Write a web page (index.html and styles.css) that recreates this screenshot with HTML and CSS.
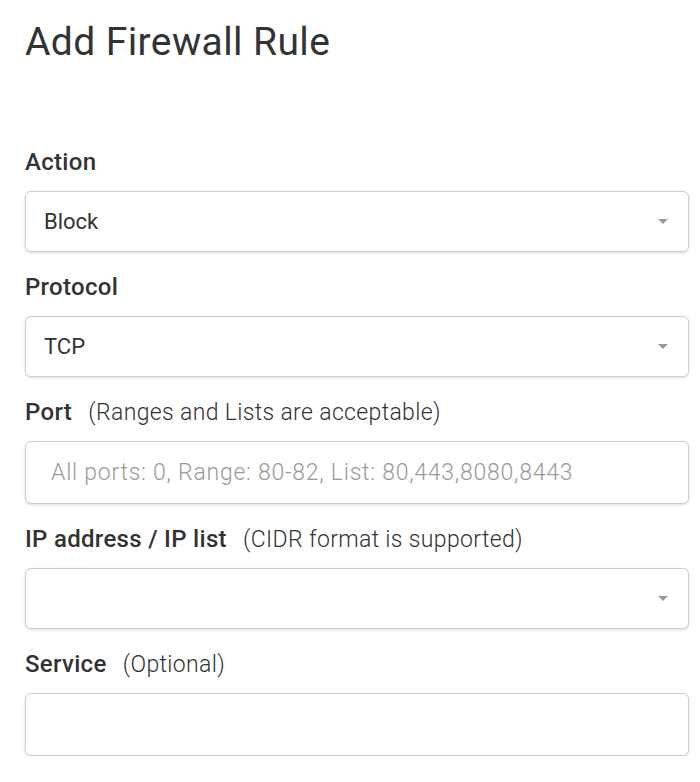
FILE: index.html
```html
<!DOCTYPE html>
<html>
<head>
<meta charset="utf-8">
<link rel="stylesheet" href="styles.css">
</head>
<body>
<div class="page">
  <h1 class="title">Add Firewall Rule</h1>
  <form class="form">
    <div class="field">
      <div class="label">Action</div>
      <div class="select"><span class="value">Block</span><span class="caret"></span></div>
    </div>
    <div class="field">
      <div class="label">Protocol</div>
      <div class="select"><span class="value">TCP</span><span class="caret"></span></div>
    </div>
    <div class="field">
      <div class="label">Port <span class="hint">(Ranges and Lists are acceptable)</span></div>
      <input class="input" type="text" placeholder="All ports: 0, Range: 80-82, List: 80,443,8080,8443">
    </div>
    <div class="field">
      <div class="label">IP address / IP list <span class="hint">(CIDR format is supported)</span></div>
      <div class="select"><span class="value"></span><span class="caret"></span></div>
    </div>
    <div class="field">
      <div class="label">Service <span class="hint">(Optional)</span></div>
      <input class="input" type="text">
    </div>
  </form>
</div>
</body>
</html>
```
FILE: styles.css
```css
html, body {
  margin: 0;
  padding: 0;
  background: #ffffff;
}
body {
  font-family: Roboto, "Liberation Sans", sans-serif;
  color: #333333;
}
.page {
  padding: 18px 11px 0 25px;
}
.title {
  margin: 0;
  font-size: 39px;
  font-weight: 400;
  line-height: 48px;
  letter-spacing: 0.4px;
  color: #333333;
}
.form {
  display: flex;
  flex-direction: column;
  gap: 20px;
  margin-top: 81px;
}
.field {
  display: flex;
  flex-direction: column;
  gap: 14px;
}
.label {
  height: 30px;
  font-size: 24px;
  font-weight: 500;
  line-height: 30px;
  letter-spacing: 0.3px;
  color: #333333;
  white-space: nowrap;
}
.hint {
  font-weight: 300;
  font-size: 23px;
  line-height: 1;
  letter-spacing: 0.35px;
  margin-left: 10px;
}
.select, .input {
  box-sizing: border-box;
  border: 1px solid #cfcfcf;
  border-radius: 6px;
  box-shadow: 0 1px 3px rgba(0, 0, 0, 0.14);
  background: #ffffff;
}
.select {
  height: 61px;
  display: flex;
  align-items: center;
  justify-content: space-between;
  padding: 0 20px 0 18px;
}
.value {
  font-size: 22px;
  color: #333333;
}
.caret {
  width: 0;
  height: 0;
  border-left: 5px solid transparent;
  border-right: 5px solid transparent;
  border-top: 5px solid #999999;
}
.input {
  height: 63px;
  width: 100%;
  padding: 0 25px;
  font-family: Roboto, "Liberation Sans", sans-serif;
  font-size: 23px;
  font-weight: 300;
  letter-spacing: 0.75px;
  color: #333333;
  outline: none;
}
.input::placeholder {
  color: #9a9a9a;
}
```
